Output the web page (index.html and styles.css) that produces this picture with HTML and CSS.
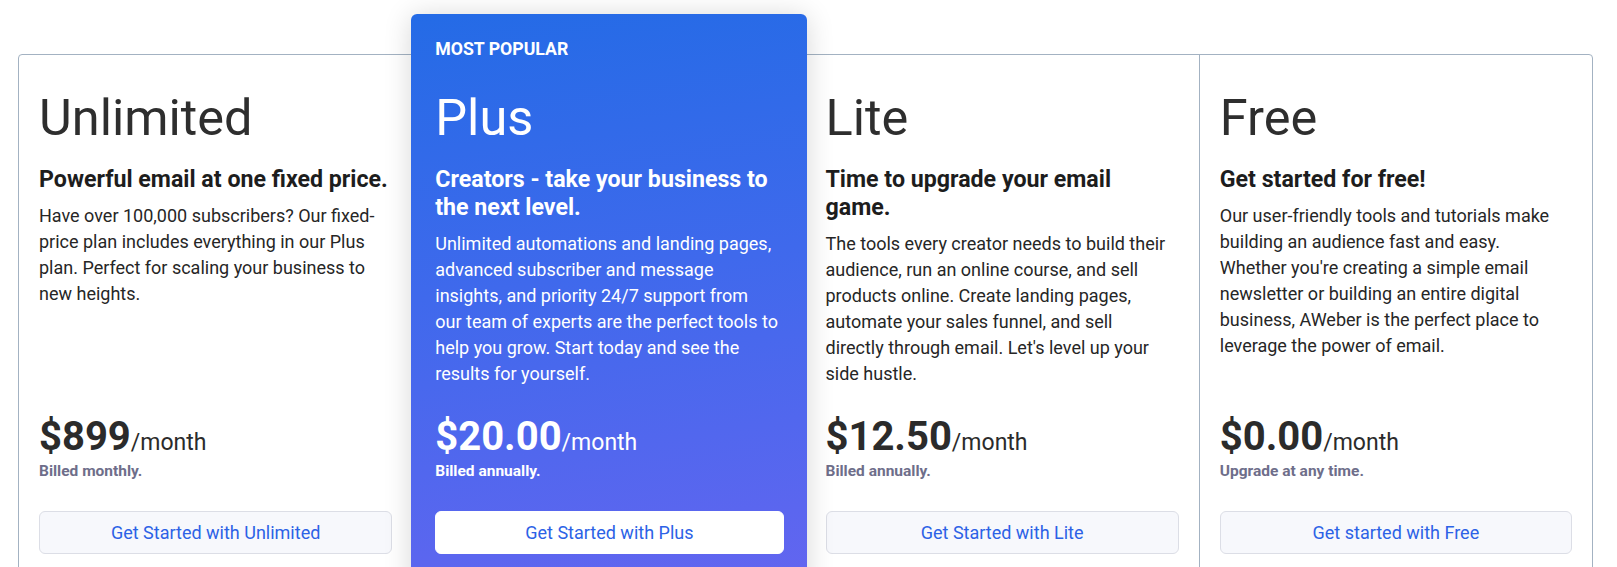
FILE: index.html
```html
<!DOCTYPE html>
<html lang="en">
<head>
<meta charset="utf-8">
<title>Pricing</title>
<link rel="stylesheet" href="styles.css">
</head>
<body>
<div class="plans">
  <div class="plan">
    <h2 class="plan-name">Unlimited</h2>
    <h3 class="plan-tagline">Powerful email at one fixed price.</h3>
    <p class="plan-desc">Have over 100,000 subscribers? Our fixed-<br>price plan includes everything in our Plus<br>plan. Perfect for scaling your business to<br>new heights.</p>
    <div class="plan-price">
      <div class="price"><span class="amount">$899</span><span class="per">/month</span></div>
      <div class="billing">Billed monthly.</div>
    </div>
    <a class="plan-btn" href="#">Get Started with Unlimited</a>
  </div>
  <div class="plan plan-featured">
    <div class="badge">MOST POPULAR</div>
    <h2 class="plan-name">Plus</h2>
    <h3 class="plan-tagline">Creators - take your business to the next level.</h3>
    <p class="plan-desc">Unlimited automations and landing pages,<br>advanced subscriber and message<br>insights, and priority 24/7 support from<br>our team of experts are the perfect tools to<br>help you grow. Start today and see the<br>results for yourself.</p>
    <div class="plan-price">
      <div class="price"><span class="amount">$20.00</span><span class="per">/month</span></div>
      <div class="billing">Billed annually.</div>
    </div>
    <a class="plan-btn" href="#">Get Started with Plus</a>
  </div>
  <div class="plan">
    <h2 class="plan-name">Lite</h2>
    <h3 class="plan-tagline">Time to upgrade your email game.</h3>
    <p class="plan-desc">The tools every creator needs to build their<br>audience, run an online course, and sell<br>products online. Create landing pages,<br>automate your sales funnel, and sell<br>directly through email. Let's level up your<br>side hustle.</p>
    <div class="plan-price">
      <div class="price"><span class="amount">$12.50</span><span class="per">/month</span></div>
      <div class="billing">Billed annually.</div>
    </div>
    <a class="plan-btn" href="#">Get Started with Lite</a>
  </div>
  <div class="plan plan-last">
    <h2 class="plan-name">Free</h2>
    <h3 class="plan-tagline">Get started for free!</h3>
    <p class="plan-desc">Our user-friendly tools and tutorials make<br>building an audience fast and easy.<br>Whether you're creating a simple email<br>newsletter or building an entire digital<br>business, AWeber is the perfect place to<br>leverage the power of email.</p>
    <div class="plan-price">
      <div class="price"><span class="amount">$0.00</span><span class="per">/month</span></div>
      <div class="billing">Upgrade at any time.</div>
    </div>
    <a class="plan-btn" href="#">Get started with Free</a>
  </div>
</div>
</body>
</html>
```

FILE: styles.css
```css
* { box-sizing: border-box; }

html, body {
  margin: 0;
  padding: 0;
  background: #ffffff;
  font-family: Roboto, "Noto Sans", Arial, sans-serif;
  overflow: hidden;
}

.plans {
  margin: 54px 24px 0 18px;
  display: grid;
  grid-template-columns: repeat(4, minmax(0, 1fr));
  border: 1px solid #a3b2c2;
  border-radius: 4px;
}

.plan {
  display: flex;
  flex-direction: column;
  min-width: 0;
  padding: 33px 20px 40px 20px;
  color: #222222;
}

.plan-last {
  border-left: 1px solid #a3b2c2;
}

.plan-featured {
  position: relative;
  z-index: 1;
  margin: -41px -1px 0 -1px;
  padding: 25px 23px 40px 24px;
  border-radius: 6px;
  color: #ffffff;
  background: linear-gradient(172deg, #246be6 0%, #3f69ec 45%, #6465f0 100%);
  box-shadow: 0 2px 28px rgba(0, 0, 0, 0.16);
}

.badge {
  font-size: 17.7px;
  line-height: 20px;
  font-weight: 700;
  margin-bottom: 29px;
}

.plan-name {
  margin: 0;
  font-size: 50.5px;
  line-height: 60px;
  font-weight: 400;
  color: #2e2e2e;
}

.plan-featured .plan-name { color: #ffffff; }

.plan-tagline {
  margin: 17px 0 0 0;
  font-size: 23.2px;
  line-height: 28px;
  font-weight: 700;
  color: #1d1d1d;
}

.plan-featured .plan-tagline { color: #ffffff; }

.plan-desc {
  margin: 10px 0 0 0;
  font-size: 18px;
  line-height: 26px;
  color: #262626;
}

.plan-featured .plan-desc { color: #ffffff; }

.plan-price {
  margin-top: auto;
  padding-top: 30px;
}

.price {
  line-height: 40px;
  color: #2b2b2b;
}

.plan-featured .price { color: #ffffff; }

.amount {
  font-size: 40px;
  font-weight: 700;
}

.per {
  font-size: 23px;
  font-weight: 400;
}

.billing {
  margin-top: -3px;
  font-size: 15.5px;
  line-height: 18px;
  font-weight: 700;
  color: #6e6e8a;
}

.plan-featured .billing { color: #ffffff; }

.plan-btn {
  display: flex;
  align-items: center;
  justify-content: center;
  margin-top: 31px;
  height: 43px;
  border: 1px solid #dcdee6;
  border-radius: 6px;
  background: #f7f8fc;
  color: #2c62e6;
  font-size: 18px;
  text-decoration: none;
}

.plan-featured .plan-btn {
  background: #ffffff;
  border-color: #ffffff;
}
```
